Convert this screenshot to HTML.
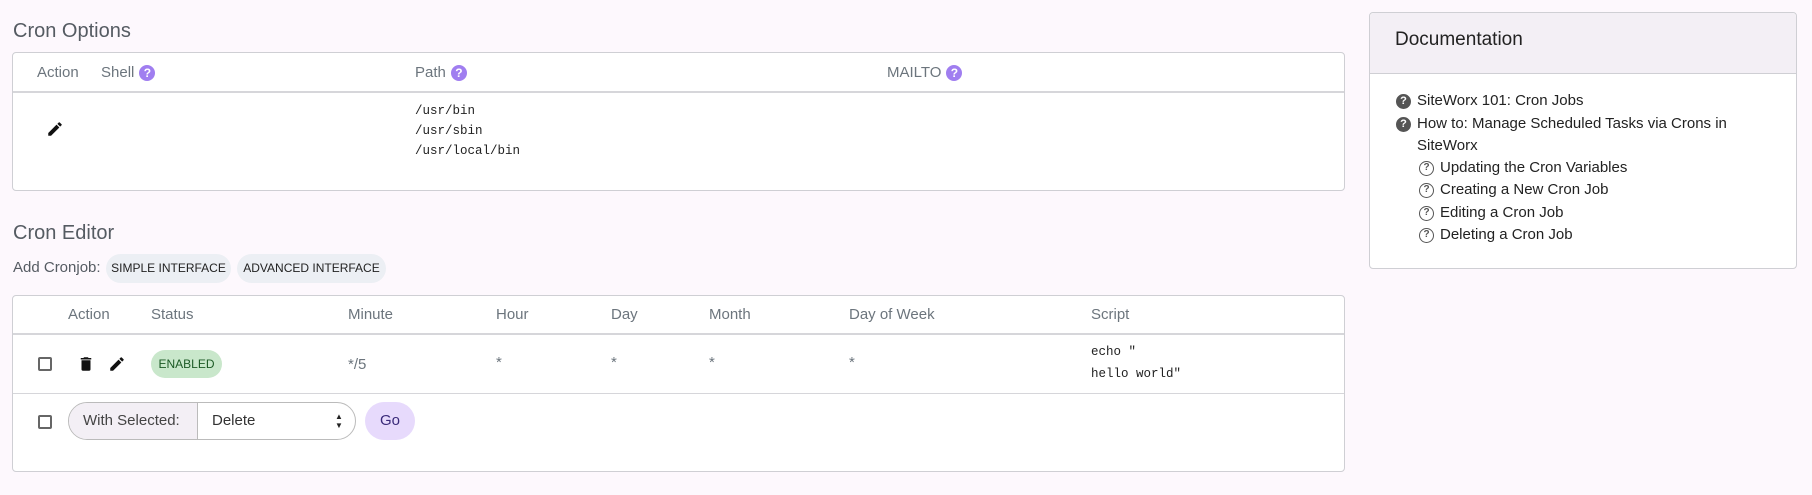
<!DOCTYPE html>
<html><head><meta charset="utf-8"><style>
*{box-sizing:border-box;margin:0;padding:0}
body{width:1812px;height:495px;background:#fdf8fd;font-family:"Liberation Sans",sans-serif;position:relative;overflow:hidden;color:#212529}
.a{position:absolute;white-space:nowrap}
.h{font-size:20px;color:#555b62}
.box{position:absolute;background:#fff;border:1px solid #cfcfd4;border-radius:4px}
.th{font-size:15px;color:#6c757d;line-height:18px;display:flex;align-items:center}
.line{position:absolute;left:0;right:0;height:2px;background:#d6d6da}
.q{display:inline-block;width:16px;height:16px;border-radius:50%;background:#a07ef0;color:#fff;font-size:12px;font-weight:bold;text-align:center;line-height:16px;margin-left:5px}
.mono{font-family:"Liberation Mono",monospace;font-size:12.5px;color:#222;line-height:20px}
.pill{position:absolute;border-radius:16px;background:#eceff4;font-size:12px;color:#222;text-align:center;line-height:29px}
.cb{position:absolute;width:14px;height:14px;border:2px solid #666;border-radius:2px;background:#fff}
.ast{font-size:15px;color:#6c757d}
.doc{font-size:15px;color:#222;line-height:22px;display:flex;align-items:center}
.dq{display:inline-block;width:15px;height:15px;border-radius:50%;background:#555;color:#fff;font-size:11px;font-weight:bold;text-align:center;line-height:15px;margin-right:6px}
.oq{display:inline-block;width:15px;height:15px;border-radius:50%;border:1.5px solid #555;color:#555;font-size:10px;font-weight:bold;text-align:center;line-height:12px;margin-right:6px}
</style></head><body>
<div class="a h" style="left:13px;top:20px">Cron Options</div>
<div class="box" style="left:12px;top:52px;width:1333px;height:139px">
 <div class="line" style="top:38px"></div>
 <div class="a th" style="left:24px;top:11px">Action</div>
 <div class="a th" style="left:88px;top:11px">Shell<span class="q">?</span></div>
 <div class="a th" style="left:402px;top:11px">Path<span class="q">?</span></div>
 <div class="a th" style="left:874px;top:11px">MAILTO<span class="q">?</span></div>
 <svg class="a" style="left:33px;top:67px" width="18" height="18" viewBox="0 0 24 24"><path d="M3 17.25V21h3.75L17.81 9.940l-3.75-3.75L3 17.25zM20.71 7.04a1 1 0 0 0 0-1.41l-2.34-2.34a1 1 0 0 0-1.41 0l-1.83 1.83 3.75 3.75 1.83-1.830z" fill="#111"/></svg>
 <div class="a mono" style="left:402px;top:48px">/usr/bin<br>/usr/sbin<br>/usr/local/bin</div>
</div>
<div class="a h" style="left:13px;top:222px">Cron Editor</div>
<div class="a" style="left:13px;top:259px;font-size:15px;color:#555b62">Add Cronjob:</div>
<div class="pill" style="left:106px;top:254px;width:125px">SIMPLE INTERFACE</div>
<div class="pill" style="left:237px;top:254px;width:149px">ADVANCED INTERFACE</div>
<div class="box" style="left:12px;top:295px;width:1333px;height:177px">
 <div class="line" style="top:37px"></div>
 <div style="position:absolute;left:0;right:0;top:97px;height:1px;background:#d6d6da"></div>
 <div class="a th" style="left:55px;top:10px">Action</div>
 <div class="a th" style="left:138px;top:10px">Status</div>
 <div class="a th" style="left:335px;top:10px">Minute</div>
 <div class="a th" style="left:483px;top:10px">Hour</div>
 <div class="a th" style="left:598px;top:10px">Day</div>
 <div class="a th" style="left:696px;top:10px">Month</div>
 <div class="a th" style="left:836px;top:10px">Day of Week</div>
 <div class="a th" style="left:1078px;top:10px">Script</div>
 <div class="cb" style="left:25px;top:61px"></div>
 <svg class="a" style="left:64px;top:59px" width="18" height="18" viewBox="0 0 24 24"><path d="M6 19a2 2 0 0 0 2 2h8a2 2 0 0 0 2-2V7H6v12zM19 4h-3.5l-1-1h-5l-1 1H5v2h14V4z" fill="#111"/></svg>
 <svg class="a" style="left:95px;top:59px" width="18" height="18" viewBox="0 0 24 24"><path d="M3 17.25V21h3.75L17.81 9.94l-3.75-3.75L3 17.25zM20.71 7.04a1 1 0 0 0 0-1.41l-2.34-2.34a1 1 0 0 0-1.41 0l-1.83 1.83 3.75 3.75 1.83-1.83z" fill="#111"/></svg>
 <div class="a" style="left:138px;top:54px;width:71px;height:28px;border-radius:14px;background:#c9e7cb;color:#1c5a25;font-size:12px;text-align:center;line-height:28px">ENABLED</div>
 <div class="a ast" style="left:335px;top:60px">*/5</div>
 <div class="a ast" style="left:483px;top:58px">*</div>
 <div class="a ast" style="left:598px;top:58px">*</div>
 <div class="a ast" style="left:696px;top:58px">*</div>
 <div class="a ast" style="left:836px;top:58px">*</div>
 <div class="a mono" style="left:1078px;top:45px;line-height:22px">echo "<br>hello world"</div>
 <div class="cb" style="left:25px;top:119px"></div>
 <div class="a" style="left:55px;top:106px;width:288px;height:38px;border:1px solid #bbb;border-radius:19px;overflow:hidden;background:#fff">
  <div class="a" style="left:0;top:0;width:129px;height:36px;background:#f3eff5;border-right:1px solid #bbb;font-size:15px;color:#444;line-height:36px;padding-left:14px">With Selected:</div>
  <div class="a" style="left:143px;top:0;font-size:15px;color:#333;line-height:36px">Delete</div>
  <div class="a" style="left:266px;top:9px;font-size:8px;line-height:9px;color:#222">▲<br>▼</div>
 </div>
 <div class="a" style="left:352px;top:106px;width:50px;height:38px;border-radius:19px;background:#e7dafc;color:#3a2a7a;font-size:15px;text-align:center;line-height:38px">Go</div>
</div>
<div class="box" style="left:1369px;top:12px;width:428px;height:257px;background:#fff">
 <div class="a" style="left:0;top:0;right:0;height:61px;background:#f3eff5;border-bottom:1px solid #cfcfd4;border-radius:4px 4px 0 0"></div>
 <div class="a" style="left:25px;top:16px;font-size:19px;color:#222">Documentation</div>
 <div class="a doc" style="left:26px;top:77px"><span class="dq">?</span>SiteWorx 101: Cron Jobs</div>
 <div class="a doc" style="left:26px;top:100px"><span class="dq">?</span>How to: Manage Scheduled Tasks via Crons in</div>
 <div class="a doc" style="left:47px;top:122px">SiteWorx</div>
 <div class="a doc" style="left:49px;top:144px"><span class="oq">?</span>Updating the Cron Variables</div>
 <div class="a doc" style="left:49px;top:166px"><span class="oq">?</span>Creating a New Cron Job</div>
 <div class="a doc" style="left:49px;top:189px"><span class="oq">?</span>Editing a Cron Job</div>
 <div class="a doc" style="left:49px;top:211px"><span class="oq">?</span>Deleting a Cron Job</div>
</div>
</body></html>
